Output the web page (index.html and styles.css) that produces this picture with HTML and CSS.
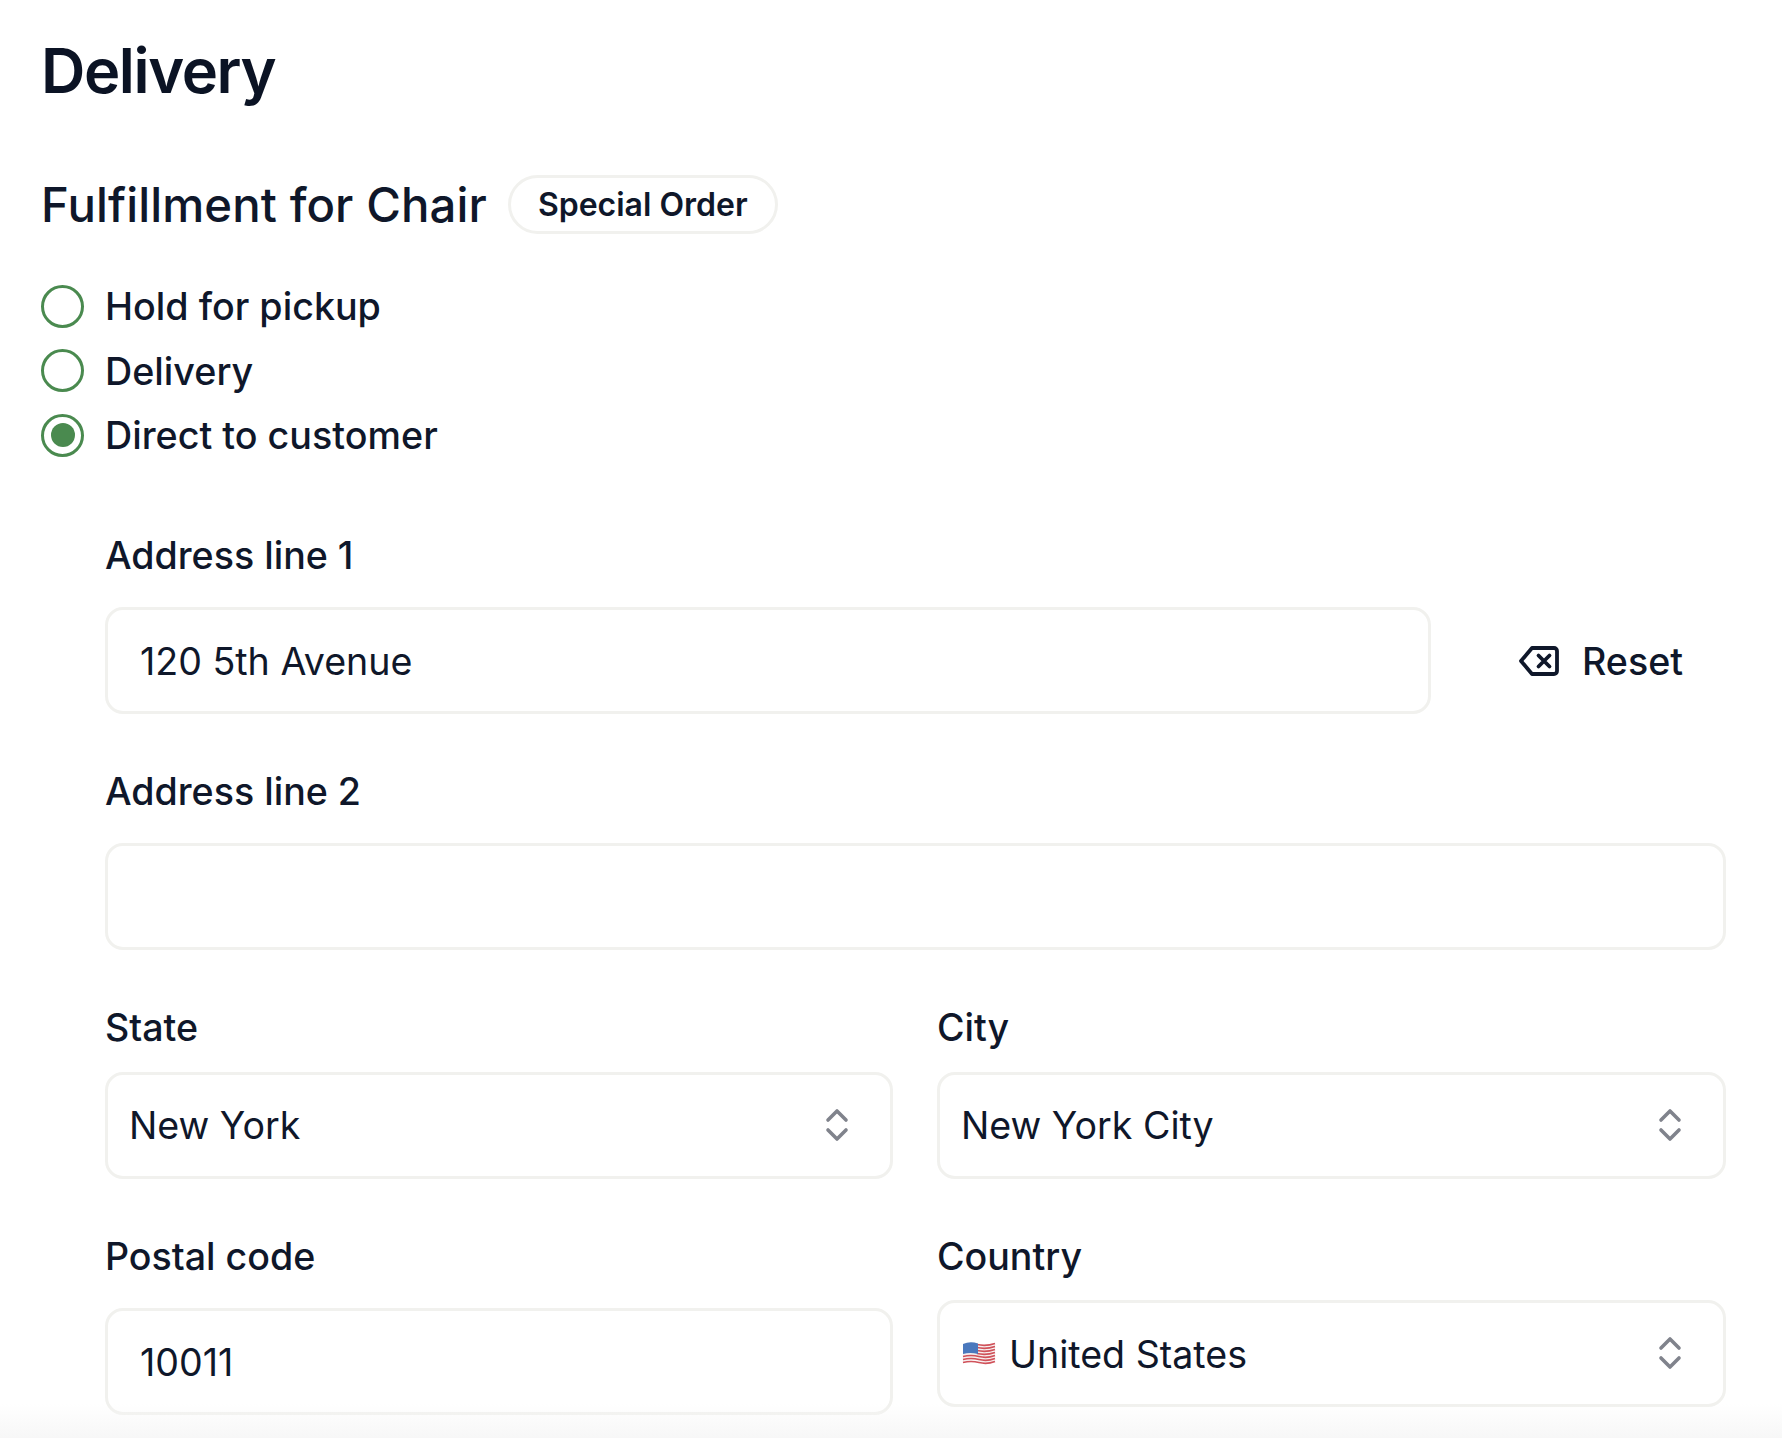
FILE: index.html
```html
<!DOCTYPE html>
<html lang="en">
<head>
<meta charset="utf-8">
<title>Delivery</title>
<link rel="stylesheet" href="styles.css">
</head>
<body>
<main class="page">
  <h1 class="title">Delivery</h1>
  <div class="subhead">
    <h2 class="subtitle">Fulfillment for Chair</h2>
    <span class="badge">Special Order</span>
  </div>
  <div class="radios">
    <div class="radio-row"><span class="radio"></span><span>Hold for pickup</span></div>
    <div class="radio-row"><span class="radio"></span><span>Delivery</span></div>
    <div class="radio-row"><span class="radio radio-on"></span><span>Direct to customer</span></div>
  </div>
  <form class="form">
    <div class="field">
      <label class="label">Address line 1</label>
      <div class="with-action">
        <div class="control input input-short">120 5th Avenue</div>
        <button type="button" class="reset">
          <svg class="reset-icon" viewBox="0 0 40 30" fill="none" stroke="currentColor" stroke-width="3.8" stroke-linejoin="round" stroke-linecap="round"><path d="M13 2H35a3 3 0 0 1 3 3V25a3 3 0 0 1-3 3H13L2 15Z"/><path d="M19.500 9.500l11 11M30.500 9.500l-11 11"/></svg>
          <span>Reset</span>
        </button>
      </div>
    </div>
    <div class="field">
      <label class="label">Address line 2</label>
      <div class="control input"></div>
    </div>
    <div class="two-col">
      <div class="field field-select">
        <label class="label">State</label>
        <div class="control select"><span>New York</span>
          <svg class="chev" viewBox="0 0 24 34" fill="none" stroke="#80838c" stroke-width="3.6" stroke-linecap="round" stroke-linejoin="round"><path d="M3 12L12 3l9 9M3 22l9 9 9-9"/></svg>
        </div>
      </div>
      <div class="field field-select">
        <label class="label">City</label>
        <div class="control select"><span>New York City</span>
          <svg class="chev" viewBox="0 0 24 34" fill="none" stroke="#80838c" stroke-width="3.6" stroke-linecap="round" stroke-linejoin="round"><path d="M3 12L12 3l9 9M3 22l9 9 9-9"/></svg>
        </div>
      </div>
      <div class="field">
        <label class="label">Postal code</label>
        <div class="control input">10011</div>
      </div>
      <div class="field field-tight">
        <label class="label">Country</label>
        <div class="control select">
          <span class="country">
            <svg class="flag" viewBox="0 0 34 26"><path d="M1 5q8-3 16 0t16-1v18q-8 3-16 0t-16 2Z" fill="#f6eeee"/><g fill="none" stroke="#d0525a" stroke-width="1.7"><path d="M15 5.500q9 2 18-1M15 8.500q9 2 18-1M15 11.500q9 2 18-1M15 14.500q9 2 18-1M1 17.500q8-2 16 0t16-1M1 20.500q8-2 16 0t16-1M1 23.500q8-2 16 0t16-1"/></g><path d="M1 5q7-3 15-.5V15q-8-2-15 0Z" fill="#4a78bd"/></svg>
            <span>United States</span>
          </span>
          <svg class="chev" viewBox="0 0 24 34" fill="none" stroke="#80838c" stroke-width="3.6" stroke-linecap="round" stroke-linejoin="round"><path d="M3 12L12 3l9 9M3 22l9 9 9-9"/></svg>
        </div>
      </div>
    </div>
  </form>
</main>
<div class="bottom-fade"></div>
</body>
</html>
```

FILE: styles.css
```css
* { box-sizing: border-box; }
html, body { margin: 0; height: 100%; background: #fff; overflow: hidden; }
body { font-family: Inter, "Liberation Sans", sans-serif; color: #0f172a; }
.page { padding: 35px 56px 0 41px; }
.title { margin: 0; font-size: 61.4px; line-height: 72px; font-weight: 600; letter-spacing: -1.4px; color: #0b1324; }
.subhead { display: flex; align-items: center; gap: 21px; margin-top: 68px; height: 59px; }
.subtitle { margin: 0; font-size: 47.3px; line-height: 59px; font-weight: 500; letter-spacing: 0.1px; }
.badge { display: flex; align-items: center; height: 59px; padding: 0 27px; border: 3px solid #f1f1ee; border-radius: 30px; font-size: 32px; font-weight: 600; }
.radios { margin-top: 40px; display: flex; flex-direction: column; }
.radio-row { display: flex; align-items: center; gap: 21px; height: 64.5px; font-size: 37.7px; font-weight: 500; }
.radio { width: 43px; height: 43px; border: 3px solid #4a8a4f; border-radius: 50%; background: #fff; display: flex; align-items: center; justify-content: center; }
.radio-on::after { content: ""; width: 24px; height: 24px; border-radius: 50%; background: #4a8a4f; }
.form { margin: 60px 0 0 64px; display: flex; flex-direction: column; gap: 50px; }
.field { display: flex; flex-direction: column; gap: 25px; }
.field-select { gap: 18px; }
.field-tight { gap: 17px; }
.label { margin: 1px 0 -1px; font-size: 37.6px; line-height: 54px; font-weight: 500; }
.control { display: flex; align-items: center; border: 3px solid #f1f1ee; border-radius: 18px; font-size: 37.6px; background: #fff; }
.input { height: 107px; padding: 2px 32px 0; }
.select { height: 107px; padding: 0 41px 0 21px; justify-content: space-between; }
.with-action { display: flex; align-items: center; }
.input-short { width: 1326px; }
.reset { display: flex; align-items: center; gap: 23px; margin-left: 88px; padding: 2px 0 0; border: 0; background: none; font: inherit; font-size: 37.6px; font-weight: 500; color: inherit; }
.reset-icon { width: 40px; height: 30px; }
.two-col { display: grid; grid-template-columns: 788px 789px; column-gap: 44px; row-gap: 50px; }
.chev { width: 24px; height: 34px; }
.country { display: flex; align-items: center; gap: 13px; padding: 2px 0 0 1px; }
.flag { width: 34px; height: 26px; margin-top: -5px; }
.bottom-fade { position: absolute; left: 0; right: 0; bottom: 0; height: 34px; background: linear-gradient(rgba(247,247,247,0), #f7f7f7); pointer-events: none; }
```
